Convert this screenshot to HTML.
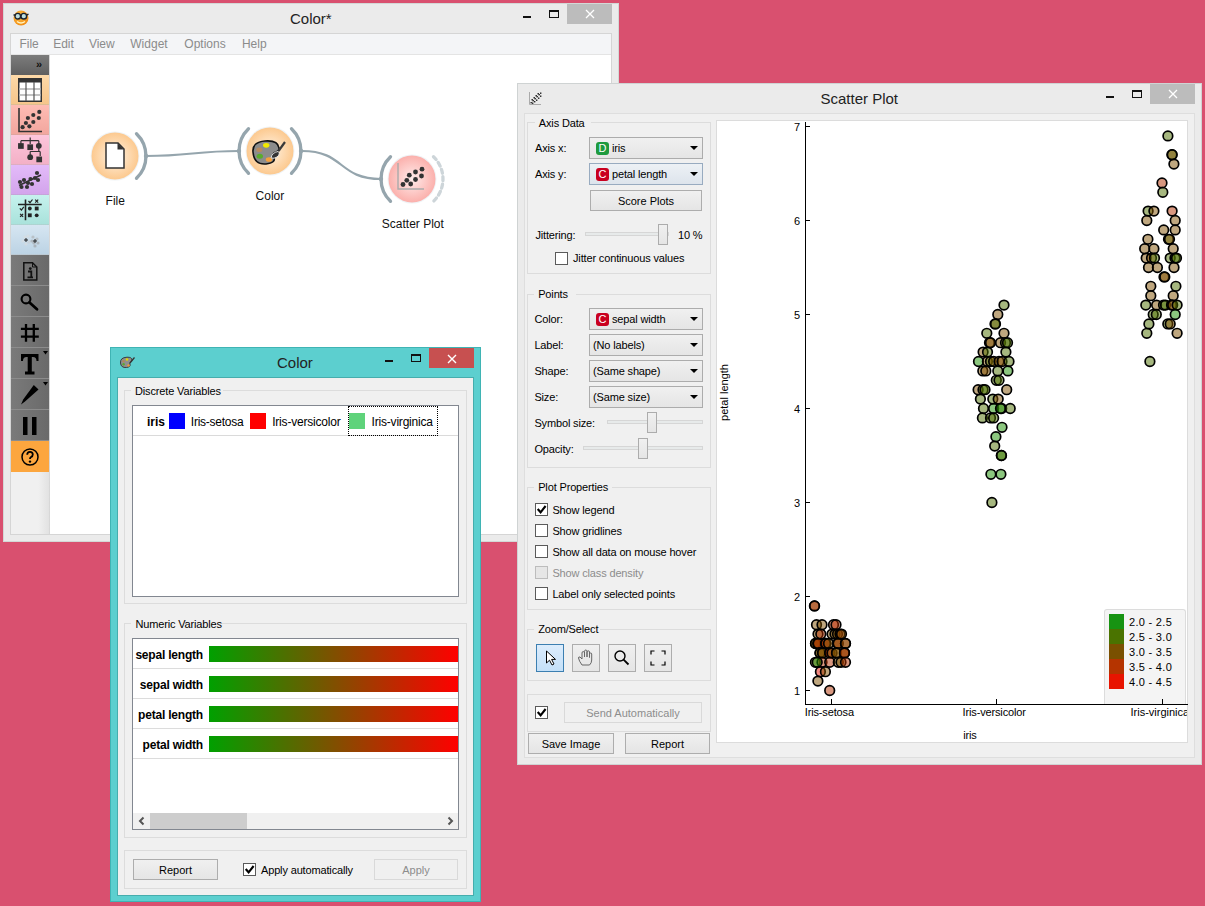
<!DOCTYPE html>
<html><head><meta charset="utf-8">
<style>
*{box-sizing:border-box;margin:0;padding:0}
html,body{width:1205px;height:906px;overflow:hidden;background:#d9506f;font-family:"Liberation Sans",sans-serif;font-size:12px;color:#000}
.a{position:absolute}
.t{position:absolute;white-space:nowrap}
svg.a{overflow:visible}
</style></head><body>
<div class="a" style="left:3px;top:3px;width:616px;height:539px;background:#ebebeb;border:1px solid #d3d8d6;"></div>
<svg class="a" style="left:12px;top:9px" width="20" height="18" viewBox="0 0 20 18">
<defs><radialGradient id="sm" cx="0.4" cy="0.35" r="0.7"><stop offset="0" stop-color="#ffc04a"/><stop offset="1" stop-color="#f08a10"/></radialGradient></defs>
<circle cx="9" cy="9" r="7.5" fill="url(#sm)"/>
<path d="M5 12.5 Q9 15.5 13 12.5" stroke="#fff3c0" stroke-width="1.5" fill="none"/>
<circle cx="5.8" cy="7.2" r="2.8" fill="#bfe0e0" stroke="#1c2430" stroke-width="1.4"/>
<circle cx="11.8" cy="7.2" r="2.8" fill="#bfe0e0" stroke="#1c2430" stroke-width="1.4"/>
<path d="M1.5 6 L3 6 M8.6 6.6 L9 6.6 M14.6 6 L16.5 5.2" stroke="#1c2430" stroke-width="1.4"/>
</svg>
<div class="t" style="left:290px;top:11.0px;font-size:15px;line-height:15px;color:#222;font-weight:normal;">Color*</div>
<div class="a" style="left:567px;top:4px;width:45px;height:20px;background:#bcbcbc;"></div>
<svg class="a" style="left:585px;top:9px" width="10" height="10"><path d="M1 1 L9 9 M9 1 L1 9" stroke="#fff" stroke-width="1.3"/></svg>
<div class="a" style="left:549px;top:10px;width:10px;height:8px;border:1px solid #111;border-top:2px solid #111;"></div>
<div class="a" style="left:523px;top:16px;width:8px;height:2px;background:#111;"></div>
<div class="a" style="left:10px;top:33px;width:602px;height:502px;border:1px solid #d5d5d5;background:#fff;"></div>
<div class="a" style="left:11px;top:34px;width:600px;height:21px;background:#f4f5f7;border-bottom:1px solid #e4e4e4;"></div>
<div class="t" style="left:19.4px;top:37.8px;font-size:12px;line-height:12px;color:#8b8b8b;font-weight:normal;">File</div>
<div class="t" style="left:53.2px;top:37.8px;font-size:12px;line-height:12px;color:#8b8b8b;font-weight:normal;">Edit</div>
<div class="t" style="left:88.9px;top:37.8px;font-size:12px;line-height:12px;color:#8b8b8b;font-weight:normal;">View</div>
<div class="t" style="left:130.3px;top:37.8px;font-size:12px;line-height:12px;color:#8b8b8b;font-weight:normal;">Widget</div>
<div class="t" style="left:184.3px;top:37.8px;font-size:12px;line-height:12px;color:#8b8b8b;font-weight:normal;">Options</div>
<div class="t" style="left:241.9px;top:37.8px;font-size:12px;line-height:12px;color:#8b8b8b;font-weight:normal;">Help</div>
<div class="a" style="left:11px;top:55px;width:39px;height:479px;background:linear-gradient(90deg,#f0f0f0 70%,#e2e2e2 97%,#cfcfcf);"></div>
<div class="a" style="left:11px;top:55px;width:38px;height:20px;background:linear-gradient(#7c7c7c,#5f5f5f);"></div>
<div class="t" style="left:36px;top:59px;font-size:11px;line-height:11px;color:#111;font-weight:bold">&#187;</div>
<div class="a" style="left:11px;top:75px;width:38px;height:30px;background:linear-gradient(#fdd9a8,#f6c58a);border-bottom:1px solid rgba(0,0,0,0.12);"></div>
<div class="a" style="left:11px;top:105px;width:38px;height:30px;background:linear-gradient(#ffbcb4,#f2a69e);border-bottom:1px solid rgba(0,0,0,0.12);"></div>
<div class="a" style="left:11px;top:135px;width:38px;height:30px;background:linear-gradient(#fdc6dc,#f3b0c6);border-bottom:1px solid rgba(0,0,0,0.12);"></div>
<div class="a" style="left:11px;top:165px;width:38px;height:30px;background:linear-gradient(#e3bbf9,#d3a4ec);border-bottom:1px solid rgba(0,0,0,0.12);"></div>
<div class="a" style="left:11px;top:195px;width:38px;height:30px;background:linear-gradient(#c6f2ee,#a9e2db);border-bottom:1px solid rgba(0,0,0,0.12);"></div>
<div class="a" style="left:11px;top:225px;width:38px;height:30px;background:linear-gradient(#d6e6f2,#bcd3e4);border-bottom:1px solid rgba(0,0,0,0.12);"></div>
<div class="a" style="left:11px;top:255px;width:38px;height:31px;background:linear-gradient(90deg,#7a7a7a,#6a6a6a);border-bottom:1px solid #8c8c8c;"></div>
<div class="a" style="left:11px;top:286px;width:38px;height:31px;background:linear-gradient(90deg,#7a7a7a,#6a6a6a);border-bottom:1px solid #8c8c8c;"></div>
<div class="a" style="left:11px;top:317px;width:38px;height:31px;background:linear-gradient(90deg,#7a7a7a,#6a6a6a);border-bottom:1px solid #8c8c8c;"></div>
<div class="a" style="left:11px;top:348px;width:38px;height:31px;background:linear-gradient(90deg,#7a7a7a,#6a6a6a);border-bottom:1px solid #8c8c8c;"></div>
<div class="a" style="left:11px;top:379px;width:38px;height:31px;background:linear-gradient(90deg,#7a7a7a,#6a6a6a);border-bottom:1px solid #8c8c8c;"></div>
<div class="a" style="left:11px;top:410px;width:38px;height:31px;background:linear-gradient(90deg,#7a7a7a,#6a6a6a);border-bottom:1px solid #8c8c8c;"></div>
<div class="a" style="left:11px;top:441px;width:38px;height:31px;background:#fca63e;"></div>
<svg class="a" style="left:18px;top:78px" width="24" height="24" viewBox="0 0 24 24"><rect x="0.75" y="0.75" width="22.5" height="22.5" fill="#fff" stroke="#333" stroke-width="1.5"/><rect x="0" y="0" width="24" height="4.5" fill="#333"/><path d="M1 11 H23 M1 17 H23" stroke="#b0b0b0" stroke-width="1.4"/><path d="M8 4 V23 M16 4 V23" stroke="#555" stroke-width="1.2"/></svg>
<svg class="a" style="left:18px;top:108px" width="25" height="25" viewBox="0 0 25 25"><path d="M1 0 V23.5 H24" stroke="#333" stroke-width="1.6" fill="none"/><circle cx="4.6" cy="19.2" r="2.1" fill="#333"/><circle cx="7.9" cy="15" r="2.1" fill="#333"/><circle cx="9.9" cy="10" r="2.1" fill="#333"/><circle cx="15.3" cy="7" r="2.1" fill="#333"/><circle cx="21.3" cy="3.9" r="2.1" fill="#333"/><circle cx="20.8" cy="10" r="2.1" fill="#333"/><circle cx="15.3" cy="14" r="2.1" fill="#333"/><circle cx="11.4" cy="18.3" r="2.1" fill="#333"/></svg>
<svg class="a" style="left:17px;top:136px" width="26" height="28" viewBox="0 0 26 28"><path d="M13.2 1.5 V8 M3.9 4.7 H21.8 M3.9 4.7 V8 M21.8 4.7 V8 M21.8 12 V15.5 M13.2 15.5 H23.2 M13.2 15.5 V24 M23.2 15.5 V20" stroke="#333" stroke-width="1.2" fill="none"/><rect x="1.05" y="7.15" width="5.7" height="5.7" fill="#333"/><rect x="10.35" y="8.35" width="5.7" height="5.7" fill="#333"/><circle cx="21.8" cy="9.8" r="2.9" fill="#333"/><circle cx="13.2" cy="21.2" r="2.9" fill="#333"/><rect x="19.35" y="20.55" width="5.7" height="5.7" fill="#333"/></svg>
<svg class="a" style="left:17px;top:168px" width="26" height="24" viewBox="0 0 26 24"><path d="M2 17.5 L24 7" stroke="#333" stroke-width="1.8"/><circle cx="3" cy="14" r="2.1" fill="#333"/><circle cx="4.5" cy="19" r="2.1" fill="#333"/><circle cx="7" cy="12" r="2.1" fill="#333"/><circle cx="10" cy="19" r="2.1" fill="#333"/><circle cx="11" cy="15" r="2.1" fill="#333"/><circle cx="13.5" cy="11" r="2.1" fill="#333"/><circle cx="15" cy="16" r="2.1" fill="#333"/><circle cx="18" cy="10" r="2.1" fill="#333"/><circle cx="20" cy="5" r="2.1" fill="#333"/><circle cx="21" cy="12" r="2.1" fill="#333"/></svg>
<svg class="a" style="left:18px;top:198px" width="24" height="24" viewBox="0 0 24 24"><path d="M7.5 1.5 V22.3 M0 6.5 H23.7" stroke="#222" stroke-width="1.6"/><path d="M10.5 3 L12 4.7 L14.5 1.5 M1.8 10.3 L3.4 12 L5.8 8.8" stroke="#222" stroke-width="1.2" fill="none"/><path d="M17.2 1.7 L20.2 4.7 M20.2 1.7 L17.2 4.7 M2.1 15.8 L5.1 18.8 M5.1 15.8 L2.1 18.8" stroke="#222" stroke-width="1.2"/><circle cx="11.8" cy="10.5" r="1.9" fill="#222"/><rect x="16.8" y="8.6" width="3.8" height="3.8" fill="#222"/><rect x="9.9" y="15.4" width="3.8" height="3.8" fill="#222"/><circle cx="18.7" cy="17.3" r="1.9" fill="#222"/></svg>
<svg class="a" style="left:18px;top:230px" width="24" height="22" viewBox="0 0 24 22"><circle cx="7" cy="7" r="1.6" fill="#ddd" opacity="0.55"/><circle cx="10" cy="6" r="1.6" fill="#ddd" opacity="0.55"/><circle cx="5" cy="11" r="1.6" fill="#ddd" opacity="0.55"/><circle cx="8" cy="14" r="1.6" fill="#ddd" opacity="0.55"/><circle cx="11" cy="12" r="1.6" fill="#ccc" opacity="0.55"/><circle cx="15" cy="7" r="1.6" fill="#aaa" opacity="0.55"/><circle cx="19" cy="9" r="1.6" fill="#aaa" opacity="0.55"/><circle cx="16" cy="13" r="1.6" fill="#999" opacity="0.55"/><circle cx="20" cy="13" r="1.6" fill="#999" opacity="0.55"/><circle cx="14" cy="11" r="1.6" fill="#999" opacity="0.55"/><circle cx="17" cy="16" r="1.6" fill="#999" opacity="0.55"/><path d="M6 10 H10 M8 8 V12 M15 11 H19 M17 9 V13" stroke="#222" stroke-width="1"/></svg>
<svg class="a" style="left:23px;top:262px" width="15" height="19" viewBox="0 0 15 19"><path d="M0.8 0.8 H9.5 L13.8 5 V18 H0.8 Z" fill="none" stroke="#111" stroke-width="1.5"/><path d="M9.5 0.8 V5 H13.8" fill="none" stroke="#111" stroke-width="1"/><circle cx="7.3" cy="6.6" r="1.4" fill="#111"/><path d="M5 9.5 H8.3 V15.3 M4.5 15.3 H10" stroke="#111" stroke-width="1.8" fill="none"/></svg>
<svg class="a" style="left:20px;top:293px" width="19" height="18" viewBox="0 0 19 18"><circle cx="6" cy="6" r="4.4" fill="none" stroke="#000" stroke-width="2.1"/><path d="M9.5 9.5 L17 16.2" stroke="#000" stroke-width="2.8" stroke-linecap="round"/></svg>
<svg class="a" style="left:20px;top:323px" width="19" height="19" viewBox="0 0 19 19"><path d="M6 0.9 V18.8 M13.8 0.9 V18.8 M0.9 5.8 H18.8 M0.9 13.7 H18.8" stroke="#000" stroke-width="2.3"/></svg>
<svg class="a" style="left:19px;top:350px" width="30" height="28" viewBox="0 0 30 28"><path d="M2 4 H19.5 V11 H17.5 Q17.5 7 14 7 H12.8 V21.5 H15.5 V24.5 H6 V21.5 H8.7 V7 H7.5 Q4 7 4 11 H2 Z" fill="#000"/><path d="M24 1 H29 L26.5 4.5 Z" fill="#000"/></svg>
<svg class="a" style="left:19px;top:381px" width="30" height="28" viewBox="0 0 30 28"><path d="M14.8 4 L19.5 8.5 L6 20.5 L2 23.5 L4.2 18.5 Z" fill="#000"/><path d="M24 1 H29 L26.5 4.5 Z" fill="#000"/></svg>
<svg class="a" style="left:22px;top:417px" width="16" height="18" viewBox="0 0 16 18"><rect x="1" y="0" width="4.5" height="18" fill="#000"/><rect x="10" y="0" width="4.5" height="18" fill="#000"/></svg>
<svg class="a" style="left:21px;top:448px" width="18" height="18" viewBox="0 0 18 18"><circle cx="9" cy="9" r="8" fill="none" stroke="#000" stroke-width="1.5"/><path d="M6.2 6.8 Q6.2 3.8 9 3.8 Q11.8 3.8 11.8 6.5 Q11.8 8.2 9.8 9.2 Q9 9.7 9 11" fill="none" stroke="#000" stroke-width="1.8"/><circle cx="9" cy="13.6" r="1.2" fill="#000"/></svg>
<svg class="a" style="left:0;top:0" width="620" height="300"><path d="M146 156 C 190 156, 195 151, 239 151" stroke="#95a5ad" stroke-width="2.2" fill="none"/><path d="M302 151 C 345 151, 338 179, 381 179" stroke="#95a5ad" stroke-width="2.2" fill="none"/></svg>
<svg class="a" style="left:75px;top:116px" width="80" height="80" viewBox="0 0 80 80"><defs><radialGradient id="g115" cx="0.5" cy="0.5" r="0.5"><stop offset="0" stop-color="#fff3e4"/><stop offset="1" stop-color="#fcc98f"/></radialGradient></defs><circle cx="40" cy="40" r="24.5" fill="#e8eef2" opacity="0.7"/><circle cx="40" cy="40" r="23.5" fill="url(#g115)"/><path d="M61.5 17.7 A 31 31 0 0 1 61.5 62.3" stroke="#95a5ad" stroke-width="3.3" fill="none" stroke-linecap="round"/><circle cx="71" cy="40" r="2.2" fill="#95a5ad"/></svg>
<svg class="a" style="left:230px;top:111px" width="80" height="80" viewBox="0 0 80 80"><defs><radialGradient id="g270" cx="0.5" cy="0.5" r="0.5"><stop offset="0" stop-color="#fff3e4"/><stop offset="1" stop-color="#fcc98f"/></radialGradient></defs><circle cx="40" cy="40" r="24.5" fill="#e8eef2" opacity="0.7"/><circle cx="40" cy="40" r="23.5" fill="url(#g270)"/><path d="M18.5 17.7 A 31 31 0 0 0 18.5 62.3" stroke="#95a5ad" stroke-width="3.3" fill="none" stroke-linecap="round"/><circle cx="9" cy="40" r="2.2" fill="#95a5ad"/><path d="M61.5 17.7 A 31 31 0 0 1 61.5 62.3" stroke="#95a5ad" stroke-width="3.3" fill="none" stroke-linecap="round"/><circle cx="71" cy="40" r="2.2" fill="#95a5ad"/></svg>
<svg class="a" style="left:372px;top:139px" width="80" height="80" viewBox="0 0 80 80"><defs><radialGradient id="g412" cx="0.5" cy="0.5" r="0.5"><stop offset="0" stop-color="#ffeceb"/><stop offset="1" stop-color="#fbb0ac"/></radialGradient></defs><circle cx="40" cy="40" r="24.5" fill="#e8eef2" opacity="0.7"/><circle cx="40" cy="40" r="23.5" fill="url(#g412)"/><path d="M18.5 17.7 A 31 31 0 0 0 18.5 62.3" stroke="#95a5ad" stroke-width="3.3" fill="none" stroke-linecap="round"/><circle cx="9" cy="40" r="2.2" fill="#95a5ad"/><path d="M61.5 17.7 A 31 31 0 0 1 61.5 62.3" stroke="#cdd5d9" stroke-width="3.3" fill="none" stroke-linecap="round" stroke-dasharray="4 3.5"/></svg>
<svg class="a" style="left:105px;top:142px" width="20" height="28" viewBox="0 0 20 28"><path d="M1 1 H13 L19 7 V26 H1 Z" fill="#fff" stroke="#333" stroke-width="1.5"/><path d="M12.5 1 V7.5 H19 Z" fill="#333"/></svg>
<svg class="a" style="left:250px;top:138px" width="38" height="30" viewBox="0 0 38 30"><path d="M3 14 Q2 4 15 3 Q28 2 29 10 Q29.5 13 26 14 Q22 15 24 19 Q26 25 16 26 Q4 27 3 14 Z" fill="#8c8c8c" stroke="#111" stroke-width="1.6"/><ellipse cx="16.2" cy="7.3" rx="3.2" ry="2.4" fill="#f2ea00"/><ellipse cx="9.3" cy="11.8" rx="3" ry="2.3" fill="#b88a5e"/><ellipse cx="9.8" cy="18.2" rx="3.2" ry="2.5" fill="#5aac2c"/><ellipse cx="19" cy="21.5" rx="3.2" ry="2.3" fill="#f5a03c"/><path d="M35 4 L28.5 13" stroke="#3a3a3a" stroke-width="2.2"/><path d="M21 20 Q22 14.5 28 13.5 Q31 15.5 27 19 Q24 21 21 20 Z" fill="#333" stroke="#eee" stroke-width="0.9"/></svg>
<svg class="a" style="left:397px;top:163px" width="30" height="30" viewBox="0 0 30 30"><path d="M1 0 V26 H27" stroke="#aaa" stroke-width="1.4" fill="none"/><circle cx="6" cy="21.5" r="2.4" fill="#333"/><circle cx="9.8" cy="17.3" r="2.4" fill="#333"/><circle cx="12.3" cy="12.2" r="2.4" fill="#333"/><circle cx="13.7" cy="21" r="2.4" fill="#333"/><circle cx="18.5" cy="9" r="2.4" fill="#333"/><circle cx="18.5" cy="16.5" r="2.4" fill="#333"/><circle cx="25" cy="6.2" r="2.4" fill="#333"/><circle cx="24.5" cy="13" r="2.4" fill="#333"/></svg>
<div class="t" style="left:105.6px;top:194.5px;font-size:12px;line-height:12px;color:#111;font-weight:normal;">File</div>
<div class="t" style="left:255.6px;top:190.2px;font-size:12px;line-height:12px;color:#111;font-weight:normal;">Color</div>
<div class="t" style="left:381.8px;top:218.4px;font-size:12px;line-height:12px;color:#111;font-weight:normal;">Scatter Plot</div>
<div class="a" style="left:517px;top:83px;width:685px;height:682px;background:#ebebeb;border:1px solid #cfd3d3;"></div>
<svg class="a" style="left:529px;top:91px" width="13" height="14" viewBox="0 0 13 14"><path d="M0.5 1 V13.5 H12" stroke="#aaa" stroke-width="1" fill="none"/><rect x="1.5" y="11" width="1.4" height="1.4" fill="#222"/><rect x="3.5" y="9" width="1.4" height="1.4" fill="#222"/><rect x="5.5" y="7" width="1.4" height="1.4" fill="#222"/><rect x="7.5" y="5" width="1.4" height="1.4" fill="#222"/><rect x="9.5" y="3" width="1.4" height="1.4" fill="#222"/><rect x="11" y="1.5" width="1.4" height="1.4" fill="#222"/><rect x="3" y="11.5" width="1.4" height="1.4" fill="#222"/><rect x="5" y="10" width="1.4" height="1.4" fill="#222"/><rect x="7" y="8.5" width="1.4" height="1.4" fill="#222"/><rect x="9" y="6.5" width="1.4" height="1.4" fill="#222"/><rect x="11" y="4.5" width="1.4" height="1.4" fill="#222"/><rect x="2.5" y="8" width="1.4" height="1.4" fill="#222"/><rect x="4.5" y="6" width="1.4" height="1.4" fill="#222"/><rect x="6.5" y="4" width="1.4" height="1.4" fill="#222"/><rect x="8.5" y="2" width="1.4" height="1.4" fill="#222"/></svg>
<div class="t" style="left:820.5px;top:91.3px;font-size:15px;line-height:15px;color:#222;font-weight:normal;">Scatter Plot</div>
<div class="a" style="left:1150px;top:84px;width:45px;height:20px;background:#bcbcbc;"></div>
<svg class="a" style="left:1168px;top:89px" width="10" height="10"><path d="M1 1 L9 9 M9 1 L1 9" stroke="#fff" stroke-width="1.3"/></svg>
<div class="a" style="left:1132px;top:90px;width:10px;height:8px;border:1px solid #111;border-top:2px solid #111;"></div>
<div class="a" style="left:1106px;top:96px;width:8px;height:2px;background:#111;"></div>
<div class="a" style="left:524px;top:113px;width:671px;height:645px;background:#f0f0f0;border:1px solid #dedede;"></div>
<div class="a" style="left:527px;top:122px;width:184px;height:152px;border:1px solid #dcdcdc;"></div>
<div class="a" style="left:534.8px;top:121px;width:56px;height:3px;background:#f0f0f0;"></div>
<div class="t" style="left:538.8px;top:118.3px;font-size:11px;line-height:11px;color:#000;font-weight:normal;letter-spacing:-0.15px;">Axis Data</div>
<div class="t" style="left:535px;top:143.1px;font-size:11px;line-height:11px;color:#000;font-weight:normal;letter-spacing:-0.15px;">Axis x:</div>
<div class="a" style="left:589px;top:137px;width:114px;height:22px;border:1px solid #acacac;background:linear-gradient(#f0f0f0,#e5e5e5);"></div>
<div class="a" style="left:596px;top:142px;width:13px;height:13px;background:#1e9a3e;border-radius:3px;"></div>
<div class="t" style="left:596px;top:142px;width:13px;text-align:center;font-size:11px;line-height:13px;color:#fff">D</div>
<div class="t" style="left:612px;top:143.1px;font-size:11px;line-height:11px;color:#000;font-weight:normal;letter-spacing:-0.15px;">iris</div>
<div class="a" style="left:690px;top:146px;width:0;height:0;border-left:4px solid transparent;border-right:4px solid transparent;border-top:4px solid #000"></div>
<div class="t" style="left:535px;top:169.1px;font-size:11px;line-height:11px;color:#000;font-weight:normal;letter-spacing:-0.15px;">Axis y:</div>
<div class="a" style="left:589px;top:163px;width:114px;height:22px;border:1px solid #98abc0;background:linear-gradient(#edf1f5,#dde4ec);"></div>
<div class="a" style="left:596px;top:168px;width:13px;height:13px;background:#c9001f;border-radius:3px;"></div>
<div class="t" style="left:596px;top:168px;width:13px;text-align:center;font-size:11px;line-height:13px;color:#fff">C</div>
<div class="t" style="left:612px;top:169.4px;font-size:11px;line-height:11px;color:#000;font-weight:normal;letter-spacing:-0.15px;">petal length</div>
<div class="a" style="left:690px;top:172px;width:0;height:0;border-left:4px solid transparent;border-right:4px solid transparent;border-top:4px solid #000"></div>
<div class="a" style="left:590px;top:190px;width:112px;height:21px;border:1px solid #adadad;background:linear-gradient(#f0f0f0,#e5e5e5);"></div>
<div class="t" style="left:496.0px;width:300px;text-align:center;top:195.5px;font-size:11px;line-height:11px;color:#000;font-weight:normal;">Score Plots</div>
<div class="t" style="left:535.4px;top:229.5px;font-size:11px;line-height:11px;color:#000;font-weight:normal;letter-spacing:-0.15px;">Jittering:</div>
<div class="a" style="left:585px;top:232px;width:84px;height:4px;border:1px solid #d6d6d6;background:#e7eaea;"></div>
<div class="a" style="left:658px;top:224px;width:10px;height:21px;border:1px solid #acacac;background:linear-gradient(#f0f0f0,#e5e5e5);"></div>
<div class="t" style="left:678px;top:229.5px;font-size:11px;line-height:11px;color:#000;font-weight:normal;letter-spacing:-0.15px;">10 %</div>
<div class="a" style="left:555px;top:252px;width:13px;height:13px;border:1px solid #5a5a5a;background:#fff;"></div>
<div class="t" style="left:573px;top:253.2px;font-size:11px;line-height:11px;color:#000;font-weight:normal;letter-spacing:-0.15px;">Jitter continuous values</div>
<div class="a" style="left:527px;top:294px;width:184px;height:174px;border:1px solid #dcdcdc;"></div>
<div class="a" style="left:534.2px;top:293px;width:42px;height:3px;background:#f0f0f0;"></div>
<div class="t" style="left:538.2px;top:289.2px;font-size:11px;line-height:11px;color:#000;font-weight:normal;letter-spacing:-0.15px;">Points</div>
<div class="t" style="left:534.4px;top:313.7px;font-size:11px;line-height:11px;color:#000;font-weight:normal;letter-spacing:-0.15px;">Color:</div>
<div class="a" style="left:589px;top:308px;width:114px;height:22px;border:1px solid #acacac;background:linear-gradient(#f0f0f0,#e5e5e5);"></div>
<div class="a" style="left:596px;top:313px;width:13px;height:13px;background:#c9001f;border-radius:3px;"></div>
<div class="t" style="left:596px;top:313px;width:13px;text-align:center;font-size:11px;line-height:13px;color:#fff">C</div>
<div class="t" style="left:612px;top:313.7px;font-size:11px;line-height:11px;color:#000;font-weight:normal;letter-spacing:-0.15px;">sepal width</div>
<div class="a" style="left:690px;top:317px;width:0;height:0;border-left:4px solid transparent;border-right:4px solid transparent;border-top:4px solid #000"></div>
<div class="t" style="left:534.4px;top:339.7px;font-size:11px;line-height:11px;color:#000;font-weight:normal;letter-spacing:-0.15px;">Label:</div>
<div class="a" style="left:589px;top:334px;width:114px;height:22px;border:1px solid #acacac;background:linear-gradient(#f0f0f0,#e5e5e5);"></div>
<div class="t" style="left:593px;top:339.7px;font-size:11px;line-height:11px;color:#000;font-weight:normal;letter-spacing:-0.15px;">(No labels)</div>
<div class="a" style="left:690px;top:343px;width:0;height:0;border-left:4px solid transparent;border-right:4px solid transparent;border-top:4px solid #000"></div>
<div class="t" style="left:534.4px;top:365.7px;font-size:11px;line-height:11px;color:#000;font-weight:normal;letter-spacing:-0.15px;">Shape:</div>
<div class="a" style="left:589px;top:360px;width:114px;height:22px;border:1px solid #acacac;background:linear-gradient(#f0f0f0,#e5e5e5);"></div>
<div class="t" style="left:593px;top:365.7px;font-size:11px;line-height:11px;color:#000;font-weight:normal;letter-spacing:-0.15px;">(Same shape)</div>
<div class="a" style="left:690px;top:369px;width:0;height:0;border-left:4px solid transparent;border-right:4px solid transparent;border-top:4px solid #000"></div>
<div class="t" style="left:534.4px;top:391.7px;font-size:11px;line-height:11px;color:#000;font-weight:normal;letter-spacing:-0.15px;">Size:</div>
<div class="a" style="left:589px;top:386px;width:114px;height:22px;border:1px solid #acacac;background:linear-gradient(#f0f0f0,#e5e5e5);"></div>
<div class="t" style="left:593px;top:391.7px;font-size:11px;line-height:11px;color:#000;font-weight:normal;letter-spacing:-0.15px;">(Same size)</div>
<div class="a" style="left:690px;top:395px;width:0;height:0;border-left:4px solid transparent;border-right:4px solid transparent;border-top:4px solid #000"></div>
<div class="t" style="left:534.4px;top:417.7px;font-size:11px;line-height:11px;color:#000;font-weight:normal;letter-spacing:-0.15px;">Symbol size:</div>
<div class="a" style="left:607px;top:420px;width:96px;height:4px;border:1px solid #d6d6d6;background:#e7eaea;"></div>
<div class="a" style="left:647px;top:412px;width:10px;height:21px;border:1px solid #acacac;background:linear-gradient(#f0f0f0,#e5e5e5);"></div>
<div class="t" style="left:534.4px;top:443.7px;font-size:11px;line-height:11px;color:#000;font-weight:normal;letter-spacing:-0.15px;">Opacity:</div>
<div class="a" style="left:583px;top:446px;width:120px;height:4px;border:1px solid #d6d6d6;background:#e7eaea;"></div>
<div class="a" style="left:638px;top:438px;width:10px;height:21px;border:1px solid #acacac;background:linear-gradient(#f0f0f0,#e5e5e5);"></div>
<div class="a" style="left:527px;top:487px;width:184px;height:123px;border:1px solid #dcdcdc;"></div>
<div class="a" style="left:534.2px;top:486px;width:78px;height:3px;background:#f0f0f0;"></div>
<div class="t" style="left:538.2px;top:482.2px;font-size:11px;line-height:11px;color:#000;font-weight:normal;letter-spacing:-0.15px;">Plot Properties</div>
<div class="a" style="left:535px;top:503px;width:13px;height:13px;border:1px solid #5a5a5a;background:#fff;"></div>
<svg class="a" style="left:535px;top:503px" width="13" height="13"><path d="M2.7 6 L5.6 9.3 L10.6 3" stroke="#000" stroke-width="2.1" fill="none"/></svg>
<div class="t" style="left:552.4px;top:505.4px;font-size:11px;line-height:11px;color:#000;font-weight:normal;letter-spacing:-0.15px;">Show legend</div>
<div class="a" style="left:535px;top:524px;width:13px;height:13px;border:1px solid #5a5a5a;background:#fff;"></div>
<div class="t" style="left:552.4px;top:526.4px;font-size:11px;line-height:11px;color:#000;font-weight:normal;letter-spacing:-0.15px;">Show gridlines</div>
<div class="a" style="left:535px;top:545px;width:13px;height:13px;border:1px solid #5a5a5a;background:#fff;"></div>
<div class="t" style="left:552.4px;top:547.4px;font-size:11px;line-height:11px;color:#000;font-weight:normal;letter-spacing:-0.15px;">Show all data on mouse hover</div>
<div class="a" style="left:535px;top:566px;width:13px;height:13px;border:1px solid #bcbcbc;background:#e6e6e6;"></div>
<div class="t" style="left:552.4px;top:568.4px;font-size:11px;line-height:11px;color:#8c8c8c;font-weight:normal;letter-spacing:-0.15px;">Show class density</div>
<div class="a" style="left:535px;top:587px;width:13px;height:13px;border:1px solid #5a5a5a;background:#fff;"></div>
<div class="t" style="left:552.4px;top:589.4px;font-size:11px;line-height:11px;color:#000;font-weight:normal;letter-spacing:-0.15px;">Label only selected points</div>
<div class="a" style="left:527px;top:629px;width:184px;height:52px;border:1px solid #dcdcdc;"></div>
<div class="a" style="left:534.2px;top:628px;width:66px;height:3px;background:#f0f0f0;"></div>
<div class="t" style="left:538.2px;top:623.7px;font-size:11px;line-height:11px;color:#000;font-weight:normal;letter-spacing:-0.15px;">Zoom/Select</div>
<div class="a" style="left:536px;top:644px;width:28px;height:28px;border:1px solid #3c7fb1;background:linear-gradient(#dcecfc,#c4e0f8);"></div>
<div class="a" style="left:572px;top:644px;width:28px;height:28px;border:1px solid #adadad;background:linear-gradient(#f0f0f0,#e5e5e5);"></div>
<div class="a" style="left:608px;top:644px;width:28px;height:28px;border:1px solid #adadad;background:linear-gradient(#f0f0f0,#e5e5e5);"></div>
<div class="a" style="left:644px;top:644px;width:28px;height:28px;border:1px solid #adadad;background:linear-gradient(#f0f0f0,#e5e5e5);"></div>
<svg class="a" style="left:545px;top:650px" width="14" height="16" viewBox="0 0 14 16"><path d="M1.5 1 V13 L4.5 10.2 L7 15 L9 14 L6.6 9.4 L10.5 9.4 Z" fill="#fff" stroke="#000" stroke-width="1"/></svg>
<svg class="a" style="left:577px;top:649px" width="18" height="18" viewBox="0 0 18 18"><path d="M5 16 Q2 12 1.5 9 Q1.5 7.5 3 8 L5 10 V4 Q5 2.5 6.3 2.5 Q7.5 2.5 7.5 4 V8 V2.5 Q7.5 1 8.8 1 Q10 1 10 2.5 V8 V3 Q10 1.8 11.3 1.8 Q12.5 1.8 12.5 3 V8.5 V5 Q12.5 4 13.6 4 Q14.7 4 14.7 5 V11 Q14.7 14 12.5 16 Z" fill="#e8e8e8" stroke="#666" stroke-width="1"/></svg>
<svg class="a" style="left:613px;top:649px" width="18" height="18" viewBox="0 0 18 18"><circle cx="7" cy="7" r="5" fill="none" stroke="#000" stroke-width="1.4"/><path d="M10.6 10.6 L15.5 15.5" stroke="#000" stroke-width="1.8"/></svg>
<svg class="a" style="left:650px;top:650px" width="16" height="16" viewBox="0 0 16 16"><path d="M1 4.5 V1 H4.5 M11.5 1 H15 V4.5 M15 11.5 V15 H11.5 M4.5 15 H1 V11.5" stroke="#000" stroke-width="1.2" fill="none"/></svg>
<div class="a" style="left:527px;top:694px;width:184px;height:38px;border:1px solid #dcdcdc;"></div>
<div class="a" style="left:535px;top:706px;width:13px;height:13px;border:1px solid #5a5a5a;background:#fff;"></div>
<svg class="a" style="left:535px;top:706px" width="13" height="13"><path d="M2.7 6 L5.6 9.3 L10.6 3" stroke="#000" stroke-width="2.1" fill="none"/></svg>
<div class="a" style="left:564px;top:702px;width:138px;height:21px;border:1px solid #d9d9d9;background:#f0f0f0;"></div>
<div class="t" style="left:483.0px;width:300px;text-align:center;top:708.2px;font-size:11px;line-height:11px;color:#8d8d8d;font-weight:normal;">Send Automatically</div>
<div class="a" style="left:528px;top:733px;width:86px;height:21px;border:1px solid #adadad;background:linear-gradient(#f0f0f0,#e5e5e5);"></div>
<div class="t" style="left:421.0px;width:300px;text-align:center;top:739.2px;font-size:11px;line-height:11px;color:#000;font-weight:normal;">Save Image</div>
<div class="a" style="left:625px;top:733px;width:85px;height:21px;border:1px solid #adadad;background:linear-gradient(#f0f0f0,#e5e5e5);"></div>
<div class="t" style="left:517.5px;width:300px;text-align:center;top:739.2px;font-size:11px;line-height:11px;color:#000;font-weight:normal;">Report</div>
<div class="a" style="left:716px;top:120px;width:472px;height:623px;background:#fff;border:1px solid #dcdcdc;"></div>
<div class="a" style="left:805px;top:122px;width:1px;height:583px;background:#000;"></div>
<div class="a" style="left:805px;top:704px;width:383px;height:1px;background:#000;"></div>
<div class="a" style="left:806px;top:690px;width:4px;height:1px;background:#000;"></div>
<div class="t" style="left:794px;top:686.2px;font-size:11px;line-height:11px;color:#000;font-weight:normal;letter-spacing:-0.15px;">1</div>
<div class="a" style="left:806px;top:596px;width:4px;height:1px;background:#000;"></div>
<div class="t" style="left:794px;top:592.2px;font-size:11px;line-height:11px;color:#000;font-weight:normal;letter-spacing:-0.15px;">2</div>
<div class="a" style="left:806px;top:502px;width:4px;height:1px;background:#000;"></div>
<div class="t" style="left:794px;top:498.2px;font-size:11px;line-height:11px;color:#000;font-weight:normal;letter-spacing:-0.15px;">3</div>
<div class="a" style="left:806px;top:408px;width:4px;height:1px;background:#000;"></div>
<div class="t" style="left:794px;top:404.2px;font-size:11px;line-height:11px;color:#000;font-weight:normal;letter-spacing:-0.15px;">4</div>
<div class="a" style="left:806px;top:314px;width:4px;height:1px;background:#000;"></div>
<div class="t" style="left:794px;top:310.2px;font-size:11px;line-height:11px;color:#000;font-weight:normal;letter-spacing:-0.15px;">5</div>
<div class="a" style="left:806px;top:220px;width:4px;height:1px;background:#000;"></div>
<div class="t" style="left:794px;top:216.2px;font-size:11px;line-height:11px;color:#000;font-weight:normal;letter-spacing:-0.15px;">6</div>
<div class="a" style="left:806px;top:126px;width:4px;height:1px;background:#000;"></div>
<div class="t" style="left:794px;top:122.2px;font-size:11px;line-height:11px;color:#000;font-weight:normal;letter-spacing:-0.15px;">7</div>
<div class="a" style="left:831px;top:699px;width:1px;height:5px;background:#000;"></div>
<div class="a" style="left:996px;top:699px;width:1px;height:5px;background:#000;"></div>
<div class="a" style="left:1162px;top:699px;width:1px;height:5px;background:#000;"></div>
<div class="t" style="left:804.8px;top:707.4px;font-size:11px;line-height:11px;color:#000;font-weight:normal;letter-spacing:-0.15px;">Iris-setosa</div>
<div class="t" style="left:962.6px;top:707.4px;font-size:11px;line-height:11px;color:#000;font-weight:normal;letter-spacing:-0.15px;">Iris-versicolor</div>
<div class="a" style="left:1130px;top:700px;width:57px;height:20px;overflow:hidden"><div class="t" style="left:0.5px;top:7.4px;font-size:11px;line-height:11px">Iris-virginica</div></div>
<div class="t" style="left:963.2px;top:730.2px;font-size:11px;line-height:11px;color:#000;font-weight:normal;letter-spacing:-0.15px;">iris</div>
<div class="t" style="left:694px;top:387px;width:60px;text-align:center;font-size:11px;line-height:11px;transform:rotate(-90deg);transform-origin:center">petal length</div>
<svg class="a" style="left:717px;top:120px" width="471" height="623"><circle cx="450.9" cy="15.9" r="4.8" fill="rgba(77,112,0,0.5)" stroke="#000" stroke-width="1.7"/><circle cx="454.9" cy="34.7" r="4.8" fill="rgba(178,48,0,0.5)" stroke="#000" stroke-width="1.7"/><circle cx="455.2" cy="34.7" r="4.8" fill="rgba(77,112,0,0.5)" stroke="#000" stroke-width="1.7"/><circle cx="456.9" cy="44.1" r="4.8" fill="rgba(128,80,0,0.5)" stroke="#000" stroke-width="1.7"/><circle cx="445.0" cy="62.9" r="4.8" fill="rgba(178,48,0,0.5)" stroke="#000" stroke-width="1.7"/><circle cx="445.8" cy="72.3" r="4.8" fill="rgba(77,112,0,0.5)" stroke="#000" stroke-width="1.7"/><circle cx="431.1" cy="91.1" r="4.8" fill="rgba(77,112,0,0.5)" stroke="#000" stroke-width="1.7"/><circle cx="436.9" cy="91.1" r="4.8" fill="rgba(128,80,0,0.5)" stroke="#000" stroke-width="1.7"/><circle cx="455.1" cy="91.1" r="4.8" fill="rgba(178,48,0,0.5)" stroke="#000" stroke-width="1.7"/><circle cx="429.8" cy="100.5" r="4.8" fill="rgba(128,80,0,0.5)" stroke="#000" stroke-width="1.7"/><circle cx="458.2" cy="100.5" r="4.8" fill="rgba(128,80,0,0.5)" stroke="#000" stroke-width="1.7"/><circle cx="446.7" cy="109.9" r="4.8" fill="rgba(128,80,0,0.5)" stroke="#000" stroke-width="1.7"/><circle cx="458.2" cy="109.9" r="4.8" fill="rgba(128,80,0,0.5)" stroke="#000" stroke-width="1.7"/><circle cx="430.9" cy="119.3" r="4.8" fill="rgba(128,80,0,0.5)" stroke="#000" stroke-width="1.7"/><circle cx="451.5" cy="119.3" r="4.8" fill="rgba(77,112,0,0.5)" stroke="#000" stroke-width="1.7"/><circle cx="452.5" cy="119.3" r="4.8" fill="rgba(128,80,0,0.5)" stroke="#000" stroke-width="1.7"/><circle cx="427.7" cy="128.7" r="4.8" fill="rgba(128,80,0,0.5)" stroke="#000" stroke-width="1.7"/><circle cx="436.9" cy="128.7" r="4.8" fill="rgba(128,80,0,0.5)" stroke="#000" stroke-width="1.7"/><circle cx="456.2" cy="128.7" r="4.8" fill="rgba(128,80,0,0.5)" stroke="#000" stroke-width="1.7"/><circle cx="429.2" cy="138.1" r="4.8" fill="rgba(128,80,0,0.5)" stroke="#000" stroke-width="1.7"/><circle cx="434.5" cy="138.1" r="4.8" fill="rgba(128,80,0,0.5)" stroke="#000" stroke-width="1.7"/><circle cx="437.5" cy="138.1" r="4.8" fill="rgba(77,112,0,0.5)" stroke="#000" stroke-width="1.7"/><circle cx="453.2" cy="138.1" r="4.8" fill="rgba(77,112,0,0.5)" stroke="#000" stroke-width="1.7"/><circle cx="458.0" cy="138.1" r="4.8" fill="rgba(77,112,0,0.5)" stroke="#000" stroke-width="1.7"/><circle cx="459.5" cy="138.1" r="4.8" fill="rgba(77,112,0,0.5)" stroke="#000" stroke-width="1.7"/><circle cx="431.5" cy="147.5" r="4.8" fill="rgba(128,80,0,0.5)" stroke="#000" stroke-width="1.7"/><circle cx="440.4" cy="147.5" r="4.8" fill="rgba(128,80,0,0.5)" stroke="#000" stroke-width="1.7"/><circle cx="457.0" cy="147.5" r="4.8" fill="rgba(128,80,0,0.5)" stroke="#000" stroke-width="1.7"/><circle cx="447.0" cy="156.9" r="4.8" fill="rgba(128,80,0,0.5)" stroke="#000" stroke-width="1.7"/><circle cx="447.8" cy="156.9" r="4.8" fill="rgba(128,80,0,0.5)" stroke="#000" stroke-width="1.7"/><circle cx="433.8" cy="166.3" r="4.8" fill="rgba(128,80,0,0.5)" stroke="#000" stroke-width="1.7"/><circle cx="458.9" cy="166.3" r="4.8" fill="rgba(77,112,0,0.5)" stroke="#000" stroke-width="1.7"/><circle cx="433.8" cy="175.7" r="4.8" fill="rgba(128,80,0,0.5)" stroke="#000" stroke-width="1.7"/><circle cx="456.2" cy="175.7" r="4.8" fill="rgba(128,80,0,0.5)" stroke="#000" stroke-width="1.7"/><circle cx="428.8" cy="185.1" r="4.8" fill="rgba(77,112,0,0.5)" stroke="#000" stroke-width="1.7"/><circle cx="439.6" cy="185.1" r="4.8" fill="rgba(128,80,0,0.5)" stroke="#000" stroke-width="1.7"/><circle cx="446.5" cy="185.1" r="4.8" fill="rgba(77,112,0,0.5)" stroke="#000" stroke-width="1.7"/><circle cx="448.5" cy="185.1" r="4.8" fill="rgba(77,112,0,0.5)" stroke="#000" stroke-width="1.7"/><circle cx="454.5" cy="185.1" r="4.8" fill="rgba(128,80,0,0.5)" stroke="#000" stroke-width="1.7"/><circle cx="455.7" cy="185.1" r="4.8" fill="rgba(128,80,0,0.5)" stroke="#000" stroke-width="1.7"/><circle cx="460.1" cy="185.1" r="4.8" fill="rgba(77,112,0,0.5)" stroke="#000" stroke-width="1.7"/><circle cx="436.2" cy="194.5" r="4.8" fill="rgba(77,112,0,0.5)" stroke="#000" stroke-width="1.7"/><circle cx="439.3" cy="194.5" r="4.8" fill="rgba(77,112,0,0.5)" stroke="#000" stroke-width="1.7"/><circle cx="458.2" cy="194.5" r="4.8" fill="rgba(26,144,0,0.5)" stroke="#000" stroke-width="1.7"/><circle cx="431.9" cy="203.9" r="4.8" fill="rgba(77,112,0,0.5)" stroke="#000" stroke-width="1.7"/><circle cx="450.8" cy="203.9" r="4.8" fill="rgba(77,112,0,0.5)" stroke="#000" stroke-width="1.7"/><circle cx="453.2" cy="203.9" r="4.8" fill="rgba(128,80,0,0.5)" stroke="#000" stroke-width="1.7"/><circle cx="429.8" cy="213.3" r="4.8" fill="rgba(77,112,0,0.5)" stroke="#000" stroke-width="1.7"/><circle cx="460.1" cy="213.3" r="4.8" fill="rgba(128,80,0,0.5)" stroke="#000" stroke-width="1.7"/><circle cx="432.9" cy="241.5" r="4.8" fill="rgba(77,112,0,0.5)" stroke="#000" stroke-width="1.7"/><circle cx="287.0" cy="185.1" r="4.8" fill="rgba(77,112,0,0.5)" stroke="#000" stroke-width="1.7"/><circle cx="280.8" cy="194.5" r="4.8" fill="rgba(128,80,0,0.5)" stroke="#000" stroke-width="1.7"/><circle cx="278.0" cy="203.9" r="4.8" fill="rgba(128,80,0,0.5)" stroke="#000" stroke-width="1.7"/><circle cx="278.5" cy="203.9" r="4.8" fill="rgba(77,112,0,0.5)" stroke="#000" stroke-width="1.7"/><circle cx="269.8" cy="213.3" r="4.8" fill="rgba(77,112,0,0.5)" stroke="#000" stroke-width="1.7"/><circle cx="287.0" cy="213.3" r="4.8" fill="rgba(128,80,0,0.5)" stroke="#000" stroke-width="1.7"/><circle cx="272.5" cy="222.7" r="4.8" fill="rgba(128,80,0,0.5)" stroke="#000" stroke-width="1.7"/><circle cx="273.5" cy="222.7" r="4.8" fill="rgba(128,80,0,0.5)" stroke="#000" stroke-width="1.7"/><circle cx="283.5" cy="222.7" r="4.8" fill="rgba(128,80,0,0.5)" stroke="#000" stroke-width="1.7"/><circle cx="288.5" cy="222.7" r="4.8" fill="rgba(77,112,0,0.5)" stroke="#000" stroke-width="1.7"/><circle cx="290.5" cy="222.7" r="4.8" fill="rgba(77,112,0,0.5)" stroke="#000" stroke-width="1.7"/><circle cx="266.1" cy="232.1" r="4.8" fill="rgba(128,80,0,0.5)" stroke="#000" stroke-width="1.7"/><circle cx="270.5" cy="232.1" r="4.8" fill="rgba(77,112,0,0.5)" stroke="#000" stroke-width="1.7"/><circle cx="288.9" cy="232.1" r="4.8" fill="rgba(77,112,0,0.5)" stroke="#000" stroke-width="1.7"/><circle cx="261.5" cy="241.5" r="4.8" fill="rgba(26,144,0,0.5)" stroke="#000" stroke-width="1.7"/><circle cx="270.4" cy="241.5" r="4.8" fill="rgba(128,80,0,0.5)" stroke="#000" stroke-width="1.7"/><circle cx="273.5" cy="241.5" r="4.8" fill="rgba(77,112,0,0.5)" stroke="#000" stroke-width="1.7"/><circle cx="276.6" cy="241.5" r="4.8" fill="rgba(128,80,0,0.5)" stroke="#000" stroke-width="1.7"/><circle cx="282.0" cy="241.5" r="4.8" fill="rgba(128,80,0,0.5)" stroke="#000" stroke-width="1.7"/><circle cx="285.0" cy="241.5" r="4.8" fill="rgba(128,80,0,0.5)" stroke="#000" stroke-width="1.7"/><circle cx="292.0" cy="241.5" r="4.8" fill="rgba(77,112,0,0.5)" stroke="#000" stroke-width="1.7"/><circle cx="265.8" cy="250.9" r="4.8" fill="rgba(128,80,0,0.5)" stroke="#000" stroke-width="1.7"/><circle cx="268.8" cy="250.9" r="4.8" fill="rgba(128,80,0,0.5)" stroke="#000" stroke-width="1.7"/><circle cx="280.8" cy="250.9" r="4.8" fill="rgba(77,112,0,0.5)" stroke="#000" stroke-width="1.7"/><circle cx="290.9" cy="250.9" r="4.8" fill="rgba(26,144,0,0.5)" stroke="#000" stroke-width="1.7"/><circle cx="279.3" cy="260.3" r="4.8" fill="rgba(77,112,0,0.5)" stroke="#000" stroke-width="1.7"/><circle cx="282.0" cy="260.3" r="4.8" fill="rgba(77,112,0,0.5)" stroke="#000" stroke-width="1.7"/><circle cx="261.1" cy="269.7" r="4.8" fill="rgba(128,80,0,0.5)" stroke="#000" stroke-width="1.7"/><circle cx="266.0" cy="269.7" r="4.8" fill="rgba(77,112,0,0.5)" stroke="#000" stroke-width="1.7"/><circle cx="268.0" cy="269.7" r="4.8" fill="rgba(77,112,0,0.5)" stroke="#000" stroke-width="1.7"/><circle cx="289.7" cy="269.7" r="4.8" fill="rgba(128,80,0,0.5)" stroke="#000" stroke-width="1.7"/><circle cx="263.4" cy="279.1" r="4.8" fill="rgba(77,112,0,0.5)" stroke="#000" stroke-width="1.7"/><circle cx="275.8" cy="279.1" r="4.8" fill="rgba(77,112,0,0.5)" stroke="#000" stroke-width="1.7"/><circle cx="281.2" cy="279.1" r="4.8" fill="rgba(128,80,0,0.5)" stroke="#000" stroke-width="1.7"/><circle cx="266.5" cy="288.5" r="4.8" fill="rgba(77,112,0,0.5)" stroke="#000" stroke-width="1.7"/><circle cx="276.6" cy="288.5" r="4.8" fill="rgba(26,144,0,0.5)" stroke="#000" stroke-width="1.7"/><circle cx="284.7" cy="288.5" r="4.8" fill="rgba(77,112,0,0.5)" stroke="#000" stroke-width="1.7"/><circle cx="283.5" cy="288.5" r="4.8" fill="rgba(26,144,0,0.5)" stroke="#000" stroke-width="1.7"/><circle cx="293.2" cy="288.5" r="4.8" fill="rgba(77,112,0,0.5)" stroke="#000" stroke-width="1.7"/><circle cx="265.4" cy="297.9" r="4.8" fill="rgba(77,112,0,0.5)" stroke="#000" stroke-width="1.7"/><circle cx="273.5" cy="297.9" r="4.8" fill="rgba(77,112,0,0.5)" stroke="#000" stroke-width="1.7"/><circle cx="276.6" cy="297.9" r="4.8" fill="rgba(77,112,0,0.5)" stroke="#000" stroke-width="1.7"/><circle cx="285.0" cy="307.3" r="4.8" fill="rgba(26,144,0,0.5)" stroke="#000" stroke-width="1.7"/><circle cx="278.9" cy="316.7" r="4.8" fill="rgba(26,144,0,0.5)" stroke="#000" stroke-width="1.7"/><circle cx="277.7" cy="326.1" r="4.8" fill="rgba(77,112,0,0.5)" stroke="#000" stroke-width="1.7"/><circle cx="284.3" cy="335.5" r="4.8" fill="rgba(26,144,0,0.5)" stroke="#000" stroke-width="1.7"/><circle cx="284.5" cy="335.5" r="4.8" fill="rgba(77,112,0,0.5)" stroke="#000" stroke-width="1.7"/><circle cx="273.9" cy="354.3" r="4.8" fill="rgba(26,144,0,0.5)" stroke="#000" stroke-width="1.7"/><circle cx="283.9" cy="354.3" r="4.8" fill="rgba(26,144,0,0.5)" stroke="#000" stroke-width="1.7"/><circle cx="274.9" cy="382.5" r="4.8" fill="rgba(77,112,0,0.5)" stroke="#000" stroke-width="1.7"/><circle cx="97.4" cy="485.9" r="4.8" fill="rgba(128,80,0,0.5)" stroke="#000" stroke-width="1.7"/><circle cx="97.6" cy="485.9" r="4.8" fill="rgba(178,48,0,0.5)" stroke="#000" stroke-width="1.7"/><circle cx="99.5" cy="504.7" r="4.8" fill="rgba(128,80,0,0.5)" stroke="#000" stroke-width="1.7"/><circle cx="105.0" cy="504.7" r="4.8" fill="rgba(128,80,0,0.5)" stroke="#000" stroke-width="1.7"/><circle cx="116.5" cy="504.7" r="4.8" fill="rgba(178,48,0,0.5)" stroke="#000" stroke-width="1.7"/><circle cx="119.0" cy="504.7" r="4.8" fill="rgba(178,48,0,0.5)" stroke="#000" stroke-width="1.7"/><circle cx="101.0" cy="514.1" r="4.8" fill="rgba(128,80,0,0.5)" stroke="#000" stroke-width="1.7"/><circle cx="103.8" cy="514.1" r="4.8" fill="rgba(178,48,0,0.5)" stroke="#000" stroke-width="1.7"/><circle cx="115.0" cy="514.1" r="4.8" fill="rgba(128,80,0,0.5)" stroke="#000" stroke-width="1.7"/><circle cx="118.0" cy="514.1" r="4.8" fill="rgba(128,80,0,0.5)" stroke="#000" stroke-width="1.7"/><circle cx="120.5" cy="514.1" r="4.8" fill="rgba(128,80,0,0.5)" stroke="#000" stroke-width="1.7"/><circle cx="123.0" cy="514.1" r="4.8" fill="rgba(178,48,0,0.5)" stroke="#000" stroke-width="1.7"/><circle cx="124.5" cy="514.1" r="4.8" fill="rgba(128,80,0,0.5)" stroke="#000" stroke-width="1.7"/><circle cx="98.5" cy="523.5" r="4.8" fill="rgba(128,80,0,0.5)" stroke="#000" stroke-width="1.7"/><circle cx="98.5" cy="523.5" r="4.8" fill="rgba(128,80,0,0.5)" stroke="#000" stroke-width="1.7"/><circle cx="101.0" cy="523.5" r="4.8" fill="rgba(178,48,0,0.5)" stroke="#000" stroke-width="1.7"/><circle cx="101.0" cy="523.5" r="4.8" fill="rgba(128,80,0,0.5)" stroke="#000" stroke-width="1.7"/><circle cx="101.0" cy="523.5" r="4.8" fill="rgba(178,48,0,0.5)" stroke="#000" stroke-width="1.7"/><circle cx="108.8" cy="523.5" r="4.8" fill="rgba(230,16,0,0.5)" stroke="#000" stroke-width="1.7"/><circle cx="108.8" cy="523.5" r="4.8" fill="rgba(230,16,0,0.5)" stroke="#000" stroke-width="1.7"/><circle cx="108.8" cy="523.5" r="4.8" fill="rgba(128,80,0,0.5)" stroke="#000" stroke-width="1.7"/><circle cx="111.5" cy="523.5" r="4.8" fill="rgba(128,80,0,0.5)" stroke="#000" stroke-width="1.7"/><circle cx="121.0" cy="523.5" r="4.8" fill="rgba(178,48,0,0.5)" stroke="#000" stroke-width="1.7"/><circle cx="121.0" cy="523.5" r="4.8" fill="rgba(178,48,0,0.5)" stroke="#000" stroke-width="1.7"/><circle cx="121.0" cy="523.5" r="4.8" fill="rgba(128,80,0,0.5)" stroke="#000" stroke-width="1.7"/><circle cx="128.5" cy="523.5" r="4.8" fill="rgba(178,48,0,0.5)" stroke="#000" stroke-width="1.7"/><circle cx="128.5" cy="523.5" r="4.8" fill="rgba(128,80,0,0.5)" stroke="#000" stroke-width="1.7"/><circle cx="103.0" cy="532.9" r="4.8" fill="rgba(230,16,0,0.5)" stroke="#000" stroke-width="1.7"/><circle cx="103.0" cy="532.9" r="4.8" fill="rgba(77,112,0,0.5)" stroke="#000" stroke-width="1.7"/><circle cx="105.5" cy="532.9" r="4.8" fill="rgba(128,80,0,0.5)" stroke="#000" stroke-width="1.7"/><circle cx="105.5" cy="532.9" r="4.8" fill="rgba(128,80,0,0.5)" stroke="#000" stroke-width="1.7"/><circle cx="112.7" cy="532.9" r="4.8" fill="rgba(178,48,0,0.5)" stroke="#000" stroke-width="1.7"/><circle cx="112.7" cy="532.9" r="4.8" fill="rgba(178,48,0,0.5)" stroke="#000" stroke-width="1.7"/><circle cx="115.0" cy="532.9" r="4.8" fill="rgba(128,80,0,0.5)" stroke="#000" stroke-width="1.7"/><circle cx="119.5" cy="532.9" r="4.8" fill="rgba(128,80,0,0.5)" stroke="#000" stroke-width="1.7"/><circle cx="119.5" cy="532.9" r="4.8" fill="rgba(128,80,0,0.5)" stroke="#000" stroke-width="1.7"/><circle cx="127.5" cy="532.9" r="4.8" fill="rgba(128,80,0,0.5)" stroke="#000" stroke-width="1.7"/><circle cx="127.5" cy="532.9" r="4.8" fill="rgba(128,80,0,0.5)" stroke="#000" stroke-width="1.7"/><circle cx="127.5" cy="532.9" r="4.8" fill="rgba(178,48,0,0.5)" stroke="#000" stroke-width="1.7"/><circle cx="98.4" cy="542.3" r="4.8" fill="rgba(128,80,0,0.5)" stroke="#000" stroke-width="1.7"/><circle cx="105.0" cy="542.3" r="4.8" fill="rgba(178,48,0,0.5)" stroke="#000" stroke-width="1.7"/><circle cx="100.2" cy="542.3" r="4.8" fill="rgba(26,144,0,0.5)" stroke="#000" stroke-width="1.7"/><circle cx="112.7" cy="542.3" r="4.8" fill="rgba(178,48,0,0.5)" stroke="#000" stroke-width="1.7"/><circle cx="121.3" cy="542.3" r="4.8" fill="rgba(128,80,0,0.5)" stroke="#000" stroke-width="1.7"/><circle cx="124.0" cy="542.3" r="4.8" fill="rgba(128,80,0,0.5)" stroke="#000" stroke-width="1.7"/><circle cx="128.5" cy="542.3" r="4.8" fill="rgba(178,48,0,0.5)" stroke="#000" stroke-width="1.7"/><circle cx="103.4" cy="551.7" r="4.8" fill="rgba(230,16,0,0.5)" stroke="#000" stroke-width="1.7"/><circle cx="108.4" cy="551.7" r="4.8" fill="rgba(128,80,0,0.5)" stroke="#000" stroke-width="1.7"/><circle cx="100.9" cy="561.1" r="4.8" fill="rgba(128,80,0,0.5)" stroke="#000" stroke-width="1.7"/><circle cx="112.7" cy="570.5" r="4.8" fill="rgba(178,48,0,0.5)" stroke="#000" stroke-width="1.7"/></svg>
<div class="a" style="left:1104px;top:609px;width:82px;height:95px;background:#f4f4f4;border:1px solid #dcdcdc;border-bottom:none;border-radius:3px 3px 0 0;"></div>
<div class="a" style="left:1109px;top:614px;width:15px;height:15px;background:#179312;"></div>
<div class="t" style="left:1129px;top:617.2px;font-size:11px;line-height:11px;color:#000;font-weight:normal;letter-spacing:0.3px">2.0 - 2.5</div>
<div class="a" style="left:1109px;top:629px;width:15px;height:15px;background:#4a7300;"></div>
<div class="t" style="left:1129px;top:632.2px;font-size:11px;line-height:11px;color:#000;font-weight:normal;letter-spacing:0.3px">2.5 - 3.0</div>
<div class="a" style="left:1109px;top:644px;width:15px;height:15px;background:#7a5000;"></div>
<div class="t" style="left:1129px;top:647.2px;font-size:11px;line-height:11px;color:#000;font-weight:normal;letter-spacing:0.3px">3.0 - 3.5</div>
<div class="a" style="left:1109px;top:659px;width:15px;height:15px;background:#b53400;"></div>
<div class="t" style="left:1129px;top:662.2px;font-size:11px;line-height:11px;color:#000;font-weight:normal;letter-spacing:0.3px">3.5 - 4.0</div>
<div class="a" style="left:1109px;top:674px;width:15px;height:15px;background:#e81400;"></div>
<div class="t" style="left:1129px;top:677.2px;font-size:11px;line-height:11px;color:#000;font-weight:normal;letter-spacing:0.3px">4.0 - 4.5</div>
<div class="a" style="left:1162px;top:699px;width:1px;height:5px;background:#000;"></div>
<div class="a" style="left:1104px;top:704px;width:83px;height:1px;background:#000;"></div>
<div class="a" style="left:110px;top:347px;width:371px;height:555px;background:#5ccfcf;border:1px solid #3fb4b4;"></div>
<svg class="a" style="left:119px;top:356px" width="16" height="13" viewBox="0 0 16 13"><path d="M1.5 7 Q1 1.5 8 1.2 Q13 1 13 4 Q13 5.5 11.5 6 Q10 6.5 11 8 Q12 11 7.5 11.5 Q2 12 1.5 7 Z" fill="#8f8f8f" stroke="#333" stroke-width="0.9"/><circle cx="8" cy="3.5" r="1.3" fill="#e5d800"/><circle cx="4.5" cy="5.3" r="1.2" fill="#b0865a"/><circle cx="4.6" cy="8.2" r="1.2" fill="#5aa830"/><circle cx="9.5" cy="9.4" r="1.2" fill="#f09a3a"/><path d="M15.5 1.5 L11 7" stroke="#333" stroke-width="1.2"/></svg>
<div class="t" style="left:277px;top:355.1px;font-size:15px;line-height:15px;color:#222;font-weight:normal;">Color</div>
<div class="a" style="left:429px;top:348px;width:45px;height:20px;background:#c75050;"></div>
<svg class="a" style="left:447px;top:354px" width="10" height="10"><path d="M1 1 L9 9 M9 1 L1 9" stroke="#fff" stroke-width="1.4"/></svg>
<div class="a" style="left:411px;top:354px;width:10px;height:8px;border:1px solid #111;border-top:2px solid #111;"></div>
<div class="a" style="left:385px;top:360px;width:8px;height:2px;background:#111;"></div>
<div class="a" style="left:117px;top:377px;width:357px;height:519px;background:#f0f0f0;border:1px solid #46adad;"></div>
<div class="a" style="left:124px;top:390px;width:343px;height:214px;border:1px solid #dcdcdc;"></div>
<div class="a" style="left:131px;top:389px;width:92px;height:3px;background:#f0f0f0;"></div>
<div class="t" style="left:135px;top:385.6px;font-size:11px;line-height:11px;color:#000;font-weight:normal;letter-spacing:-0.15px;">Discrete Variables</div>
<div class="a" style="left:132px;top:405px;width:327px;height:192px;background:#fff;border:1px solid #828790;"></div>
<div class="a" style="left:133px;top:435px;width:325px;height:1px;background:#dadada;"></div>
<div class="t" style="left:147px;top:416.3px;font-size:12px;line-height:12px;color:#000;font-weight:bold;">iris</div>
<div class="a" style="left:169px;top:413px;width:16px;height:16px;background:#0000ff;"></div>
<div class="t" style="left:190.8px;top:416.3px;font-size:12px;line-height:12px;color:#000;font-weight:normal;letter-spacing:-0.25px">Iris-setosa</div>
<div class="a" style="left:250px;top:413px;width:16px;height:16px;background:#ff0000;"></div>
<div class="t" style="left:272.2px;top:416.3px;font-size:12px;line-height:12px;color:#000;font-weight:normal;letter-spacing:-0.2px">Iris-versicolor</div>
<div class="a" style="left:349px;top:413px;width:16px;height:16px;background:#5fd37b;"></div>
<div class="t" style="left:371.6px;top:416.3px;font-size:12px;line-height:12px;color:#000;font-weight:normal;letter-spacing:-0.2px">Iris-virginica</div>
<div class="a" style="left:348px;top:406px;width:90px;height:30px;border:1px dotted #000;"></div>
<div class="a" style="left:124px;top:623px;width:343px;height:215px;border:1px solid #dcdcdc;"></div>
<div class="a" style="left:131.4px;top:622px;width:90px;height:3px;background:#f0f0f0;"></div>
<div class="t" style="left:135.4px;top:619.2px;font-size:11px;line-height:11px;color:#000;font-weight:normal;letter-spacing:-0.15px;">Numeric Variables</div>
<div class="a" style="left:132px;top:638px;width:327px;height:192px;background:#fff;border:1px solid #828790;"></div>
<div class="t" style="left:133px;top:649px;width:70px;text-align:right;font-size:12px;line-height:12px;font-weight:bold;letter-spacing:-0.2px">sepal length</div>
<div class="a" style="left:209px;top:646px;width:249px;height:16px;background:linear-gradient(90deg,#00a000,#7f5000 50%,#ff0000);"></div>
<div class="a" style="left:133px;top:668px;width:325px;height:1px;background:#dcdcdc;"></div>
<div class="t" style="left:133px;top:679px;width:70px;text-align:right;font-size:12px;line-height:12px;font-weight:bold;letter-spacing:-0.2px">sepal width</div>
<div class="a" style="left:209px;top:676px;width:249px;height:16px;background:linear-gradient(90deg,#00a000,#7f5000 50%,#ff0000);"></div>
<div class="a" style="left:133px;top:698px;width:325px;height:1px;background:#dcdcdc;"></div>
<div class="t" style="left:133px;top:709px;width:70px;text-align:right;font-size:12px;line-height:12px;font-weight:bold;letter-spacing:-0.2px">petal length</div>
<div class="a" style="left:209px;top:706px;width:249px;height:16px;background:linear-gradient(90deg,#00a000,#7f5000 50%,#ff0000);"></div>
<div class="a" style="left:133px;top:728px;width:325px;height:1px;background:#dcdcdc;"></div>
<div class="t" style="left:133px;top:739px;width:70px;text-align:right;font-size:12px;line-height:12px;font-weight:bold;letter-spacing:-0.2px">petal width</div>
<div class="a" style="left:209px;top:736px;width:249px;height:16px;background:linear-gradient(90deg,#00a000,#7f5000 50%,#ff0000);"></div>
<div class="a" style="left:133px;top:758px;width:325px;height:1px;background:#dcdcdc;"></div>
<div class="a" style="left:133px;top:813px;width:325px;height:16px;background:#f0f0f0;"></div>
<div class="a" style="left:150px;top:813px;width:97px;height:16px;background:#cdcdcd;"></div>
<svg class="a" style="left:137px;top:816px" width="10" height="10" viewBox="0 0 10 10"><path d="M6.5 1.5 L3 5 L6.5 8.5" stroke="#555" stroke-width="2" fill="none"/></svg>
<svg class="a" style="left:445px;top:816px" width="10" height="10" viewBox="0 0 10 10"><path d="M3.5 1.5 L7 5 L3.5 8.5" stroke="#555" stroke-width="2" fill="none"/></svg>
<div class="a" style="left:124px;top:850px;width:343px;height:39px;border:1px solid #dcdcdc;"></div>
<div class="a" style="left:133px;top:859px;width:85px;height:21px;border:1px solid #adadad;background:linear-gradient(#f0f0f0,#e5e5e5);"></div>
<div class="t" style="left:25.5px;width:300px;text-align:center;top:865.2px;font-size:11px;line-height:11px;color:#000;font-weight:normal;">Report</div>
<div class="a" style="left:243px;top:863px;width:13px;height:13px;border:1px solid #5a5a5a;background:#fff;"></div>
<svg class="a" style="left:243px;top:863px" width="13" height="13"><path d="M2.7 6 L5.6 9.3 L10.6 3" stroke="#000" stroke-width="2.1" fill="none"/></svg>
<div class="t" style="left:261px;top:865.2px;font-size:11px;line-height:11px;color:#000;font-weight:normal;letter-spacing:-0.15px;">Apply automatically</div>
<div class="a" style="left:374px;top:859px;width:84px;height:21px;border:1px solid #d9d9d9;background:#f0f0f0;"></div>
<div class="t" style="left:266.0px;width:300px;text-align:center;top:865.2px;font-size:11px;line-height:11px;color:#8d8d8d;font-weight:normal;">Apply</div>
</body></html>
